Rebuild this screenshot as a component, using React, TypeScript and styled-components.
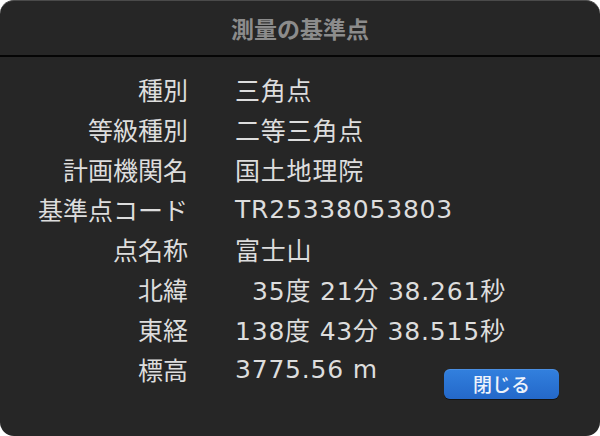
import React from 'react'
import styled, { createGlobalStyle } from 'styled-components'

const GlobalStyle = createGlobalStyle`
    html, body {
        margin: 0;
        padding: 0;
        background: #ffffff;
    }
    body {
        font-family: "DejaVu Sans", "Noto Sans CJK JP", sans-serif;
    }
`

interface IRow {
    label: string
    value: string
    indent?: boolean
}

const rows: IRow[] = [
    { label: '種別', value: '三角点' },
    { label: '等級種別', value: '二等三角点' },
    { label: '計画機関名', value: '国土地理院' },
    { label: '基準点コード', value: 'TR25338053803' },
    { label: '点名称', value: '富士山' },
    { label: '北緯', value: '35度 21分 38.261秒', indent: true },
    { label: '東経', value: '138度 43分 38.515秒' },
]

const App = () => {
    return (
        <>
            <GlobalStyle />
            <Window>
                <TitleBar>
                    <Title>測量の基準点</Title>
                </TitleBar>
                <Body>
                    {rows.map((row) => (
                        <React.Fragment key={row.label}>
                            <Label>{row.label}</Label>
                            <Value $indent={row.indent}>{row.value}</Value>
                        </React.Fragment>
                    ))}
                    <Label>標高</Label>
                    <LastValue>
                        <Value>3775.56 m</Value>
                        <CloseButton type='button'>閉じる</CloseButton>
                    </LastValue>
                </Body>
            </Window>
        </>
    )
}

export default App

const Window = styled.div`
    width: 600px;
    height: 436px;
    box-sizing: border-box;
    background: #262626;
    border-radius: 14px;
    border-top: 1px solid #4a4a4a;
    overflow: hidden;
    display: flex;
    flex-direction: column;
`

const TitleBar = styled.div`
    height: 54px;
    display: flex;
    justify-content: center;
    align-items: center;
    border-bottom: 2px solid #050505;
`

const Title = styled.h1`
    margin: 0;
    font-family: "Noto Sans CJK JP", sans-serif;
    font-size: 23px;
    font-weight: 700;
    color: #8c8c8c;
`

const Body = styled.div`
    display: grid;
    grid-template-columns: 188px 1fr;
    grid-auto-rows: 40px;
    column-gap: 47px;
    padding: 12px 41px 0 0;
`

const Label = styled.div`
    display: flex;
    align-items: center;
    justify-content: flex-end;
    font-family: "Noto Sans CJK JP", sans-serif;
    font-size: 25px;
    color: #dddddd;
    white-space: nowrap;
`

const Value = styled.div<{ $indent?: boolean }>`
    display: flex;
    align-items: center;
    padding-left: ${(p) => (p.$indent ? '17px' : '0')};
    font-family: "DejaVu Sans", "Noto Sans CJK JP", sans-serif;
    font-size: 25px;
    letter-spacing: 0.8px;
    color: #dddddd;
    white-space: nowrap;
`

const LastValue = styled.div`
    display: flex;
    justify-content: space-between;
    align-items: stretch;
`

const CloseButton = styled.button`
    align-self: flex-start;
    margin-top: 20px;
    width: 115px;
    height: 30px;
    padding: 0;
    border: none;
    border-radius: 6px;
    background: linear-gradient(#3280de, #2468c9);
    box-shadow: 0 1px 0 rgba(0, 0, 0, 0.5), inset 0 1px 0 rgba(255, 255, 255, 0.12);
    font-family: "Noto Sans CJK JP", sans-serif;
    font-size: 19px;
    font-weight: 500;
    color: #eef3fb;
    line-height: 30px;
    cursor: pointer;
`
